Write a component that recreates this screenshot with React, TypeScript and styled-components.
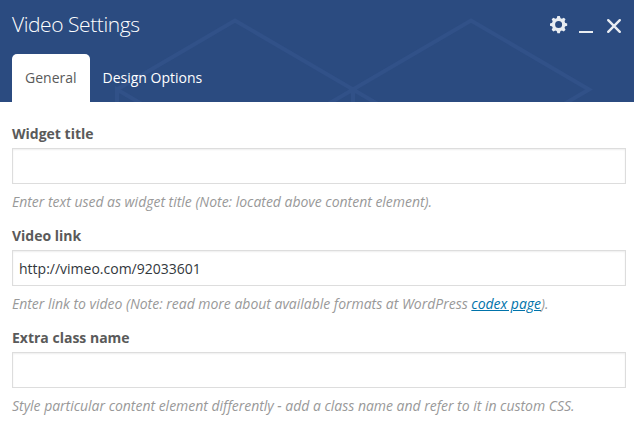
import React from "react";
import styled, { createGlobalStyle } from "styled-components";

const GlobalStyle = createGlobalStyle`
  *, *::before, *::after { box-sizing: border-box; }
  body {
    margin: 0;
    background: #fff;
    font-family: "Open Sans", "Noto Sans", sans-serif;
    font-size: 14px;
    line-height: 20px;
    color: #5a5a5a;
    overflow: hidden;
  }
`;

const Panel = styled.main`
  width: 634px;
  height: 427px;
  background: #fff;
`;

const Header = styled.header`
  position: relative;
  display: flex;
  flex-direction: column;
  justify-content: space-between;
  height: 102px;
  padding: 0 10px 0 12px;
  background: #2b4b80;
  color: #fff;
`;

const Pattern = styled.svg`
  position: absolute;
  inset: 0;
`;

const TitleBar = styled.div`
  position: relative;
  display: flex;
  justify-content: space-between;
  height: 50px;
`;

const Title = styled.h1`
  margin: 10px 0 0;
  font-size: 21px;
  font-weight: 300;
  letter-spacing: -0.43px;
  line-height: 29px;
`;

const Controls = styled.div`
  display: flex;
  gap: 10px;
  margin-top: 16px;
`;

const Control = styled.button`
  display: block;
  width: 18px;
  height: 18px;
  padding: 0;
  border: 0;
  background: none;
  color: #e9edf2;

  svg { display: block; }
`;

const Tabs = styled.nav`
  position: relative;
  display: flex;
  height: 48px;
`;

const Tab = styled.button<{ $active?: boolean }>`
  height: 48px;
  padding: 0 13px;
  border: 0;
  border-radius: 5px 5px 0 0;
  background: ${(p) => (p.$active ? "#fff" : "transparent")};
  color: ${(p) => (p.$active ? "#5a5a5a" : "#fff")};
  font: 400 14px/20px "Open Sans", "Noto Sans", sans-serif;
  white-space: nowrap;
`;

const Form = styled.form`
  padding: 22px 8px 0 12px;
`;

const Field = styled.div`
  height: 102px;
`;

const Label = styled.label`
  display: block;
  height: 24px;
  font-weight: 700;
  line-height: 20px;
`;

const Input = styled.input`
  display: block;
  width: 100%;
  height: 36px;
  padding: 0 6px;
  border: 1px solid #ddd;
  border-radius: 0;
  outline: 0;
  background: #fff;
  box-shadow: inset 0 1px 2px rgba(0, 0, 0, 0.07);
  color: #32373c;
  font: 400 14px/20px "Open Sans", "Noto Sans", sans-serif;
`;

const Hint = styled.p`
  margin: 8px 0 0;
  color: #999;
  font-style: italic;
  letter-spacing: -0.02px;
  white-space: nowrap;
`;

const Link = styled.a`
  color: #0073aa;
  text-decoration: underline;
`;

const teeth = [0, 45, 90, 135, 180, 225, 270, 315];

const fields = [
  {
    id: "title",
    label: "Widget title",
    value: "",
    hint: <>Enter text used as widget title (Note: located above content element).</>,
  },
  {
    id: "link",
    label: "Video link",
    value: "http://vimeo.com/92033601",
    hint: (
      <>
        Enter link to video (Note: read more about available formats at WordPress{" "}
        <Link href="#">codex page</Link>).
      </>
    ),
  },
  {
    id: "class",
    label: "Extra class name",
    value: "",
    hint: <>Style particular content element differently - add a class name and refer to it in custom CSS.</>,
  },
];

export default function App() {
  return (
    <>
      <GlobalStyle />
      <Panel>
        <Header>
          <Pattern width="634" height="102" viewBox="0 0 634 102" fill="none" stroke="#315188" strokeWidth="4" aria-hidden="true">
            <path d="M117 89.5 235 20.5 353 89.5 471 20.5 589 89.5 471 158.5 353 89.5 235 158.5 117 89.5V110M353 89.5V110" />
          </Pattern>
          <TitleBar>
            <Title>Video Settings</Title>
            <Controls>
              <Control type="button" aria-label="Settings">
                <svg width="18" height="18" viewBox="0 0 18 18">
                  <circle cx="8.6" cy="8.6" r="5.1" fill="none" stroke="currentColor" strokeWidth="3.2" />
                  {teeth.map((a) => (
                    <path key={a} d="M6.4 3.2 7.4 0h2.4l1 3.2Z" fill="currentColor" transform={`rotate(${a} 8.6 8.6)`} />
                  ))}
                </svg>
              </Control>
              <Control type="button" aria-label="Minimize">
                <svg width="18" height="18" viewBox="0 0 18 18">
                  <path d="M1 15h14v2H1Z" fill="currentColor" />
                </svg>
              </Control>
              <Control type="button" aria-label="Close">
                <svg width="18" height="18" viewBox="0 0 18 18" stroke="currentColor" strokeWidth="2.4" strokeLinecap="round">
                  <path d="M2.2 4.2 13.8 15.8M13.8 4.2 2.2 15.8" />
                </svg>
              </Control>
            </Controls>
          </TitleBar>
          <Tabs>
            <Tab type="button" $active>General</Tab>
            <Tab type="button">Design Options</Tab>
          </Tabs>
        </Header>
        <Form>
          {fields.map((f) => (
            <Field key={f.id}>
              <Label htmlFor={f.id}>{f.label}</Label>
              <Input id={f.id} type="text" defaultValue={f.value} />
              <Hint>{f.hint}</Hint>
            </Field>
          ))}
        </Form>
      </Panel>
    </>
  );
}
